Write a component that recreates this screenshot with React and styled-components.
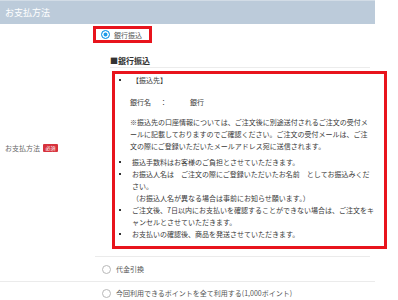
import React from 'react';
import styled, { createGlobalStyle } from 'styled-components';

const GlobalStyle = createGlobalStyle`
  body {
    margin: 0;
    background: #fff;
    font-family: "Noto Sans CJK JP", "Noto Sans", sans-serif;
    color: #555;
  }
`;

const Table = styled.div`
  width: 375px;
`;

const Header = styled.div`
  height: 23px;
  border-top: 1px solid #d2dce6;
  background: #bccbda;
  color: #fff;
  font-size: 9px;
  display: flex;
  align-items: center;
  padding-left: 5px;
`;

const Row = styled.div`
  display: grid;
  grid-template-columns: 95px 1fr;
  border-bottom: ${p => (p.$line ? '1px solid #ebebeb' : 'none')};
`;

const Label = styled.div`
  align-self: center;
  padding-left: 5px;
  font-size: 7px;
  color: #666;
  display: flex;
  align-items: center;
  margin-top: ${p => p.$offset || 0}px;
`;

const Badge = styled.span`
  display: inline-flex;
  align-items: center;
  justify-content: center;
  margin-left: 3px;
  width: 15px;
  height: 8px;
  border-radius: 1px;
  background: #d7323c;
  color: #fff;
  font-size: 5px;
`;

const Cell = styled.div`
  display: flex;
  flex-direction: column;
  align-items: flex-start;
`;

const Highlight = styled.div`
  display: flex;
  align-items: center;
  gap: 4px;
  margin: 2px 0 0 -2px;
  height: 11px;
  padding: 0 7px 0 5px;
  border: 3px solid #e8141c;
  font-size: 7px;
  color: #555;
`;

const Radio = styled.span`
  width: 9px;
  height: 9px;
  border-radius: 50%;
  box-sizing: border-box;
  flex: none;
  ${p =>
    p.$checked
      ? 'background: #1e9be9; border: 1.5px solid #1e9be9; box-shadow: inset 0 0 0 1.5px #fff;'
      : 'background: #fff; border: 1px solid #b8b8b8;'}
`;

const Option = styled.div`
  display: flex;
  align-items: center;
  gap: 5px;
  height: ${p => p.$h}px;
  padding-left: 7px;
  font-size: 7px;
  color: #555;
`;

const Detail = styled.div`
  margin-left: 15px;
  margin-top: 12px;
`;

const DetailTitle = styled.div`
  width: 260px;
  font-size: 8px;
  font-weight: bold;
  color: #333;
  line-height: 11px;
  padding-bottom: 1px;
  border-bottom: 1px solid #ececec;
`;

const NoticeBox = styled.div`
  margin: 3px 0 0 2px;
  width: 269px;
  border: 3px solid #e8141c;
  padding: 0 0 6px 0;
  font-size: 7px;
  line-height: 12px;
  color: #3a3a3a;
  white-space: nowrap;
`;

const List = styled.ul`
  list-style: none;
  margin: ${p => p.$mt || 0}px 0 0;
  padding: 0;
`;

const Item = styled.li`
  position: relative;
  padding-left: 17px;
  &::before {
    content: '';
    position: absolute;
    left: 4px;
    top: 5px;
    width: 2px;
    height: 2px;
    background: #333;
  }
`;

const Para = styled.div`
  margin-top: ${p => p.$mt || 0}px;
  margin-left: -2px;
`;

const Spread = styled.span`
  display: inline-block;
  width: ${p => p.$w}px;
`;

const Divider = styled.div`
  width: 275px;
  height: 1px;
  background: #ebebeb;
  margin-top: 7px;
`;

export default function App() {
  return (
    <>
      <GlobalStyle />
      <Table>
        <Header>お支払方法</Header>
        <Row $line>
          <Label $offset={-10}>
            お支払方法<Badge>必須</Badge>
          </Label>
          <Cell>
            <Highlight>
              <Radio $checked />
              銀行振込
            </Highlight>
            <Detail>
              <DetailTitle>■銀行振込</DetailTitle>
              <NoticeBox>
                <List>
                  <Item>
                    【振込先】
                    <Para $mt={10}>
                      <Spread $w={30}>銀行名</Spread>
                      <Spread $w={30}>：</Spread>銀行
                    </Para>
                    <Para $mt={8}>
                      ※振込先の口座情報については、ご注文後に別途送付されるご注文の受付メ
                      <br />
                      ールに記載しておりますのでご確認ください。ご注文の受付メールは、ご注
                      <br />
                      文の際にご登録いただいたメールアドレス宛に送信されます。
                    </Para>
                  </Item>
                </List>
                <List $mt={4}>
                  <Item>振込手数料はお客様のご負担とさせていただきます。</Item>
                  <Item>
                    お振込人名は　ご注文の際にご登録いただいたお名前　としてお振込みくだ
                    <br />
                    さい。
                    <br />
                    （お振込人名が異なる場合は事前にお知らせ願います。）
                  </Item>
                  <Item>
                    ご注文後、7日以内にお支払いを確認することができない場合は、ご注文をキ
                    <br />
                    ャンセルとさせていただきます。
                  </Item>
                  <Item>お支払いの確認後、商品を発送させていただきます。</Item>
                </List>
              </NoticeBox>
            </Detail>
            <Divider />
            <Option $h={24}>
              <Radio />
              代金引換
            </Option>
          </Cell>
        </Row>
        <Row>
          <div />
          <Cell>
            <Option $h={22}>
              <Radio />
              今回利用できるポイントを全て利用する(1,000ポイント)
            </Option>
          </Cell>
        </Row>
      </Table>
    </>
  );
}
